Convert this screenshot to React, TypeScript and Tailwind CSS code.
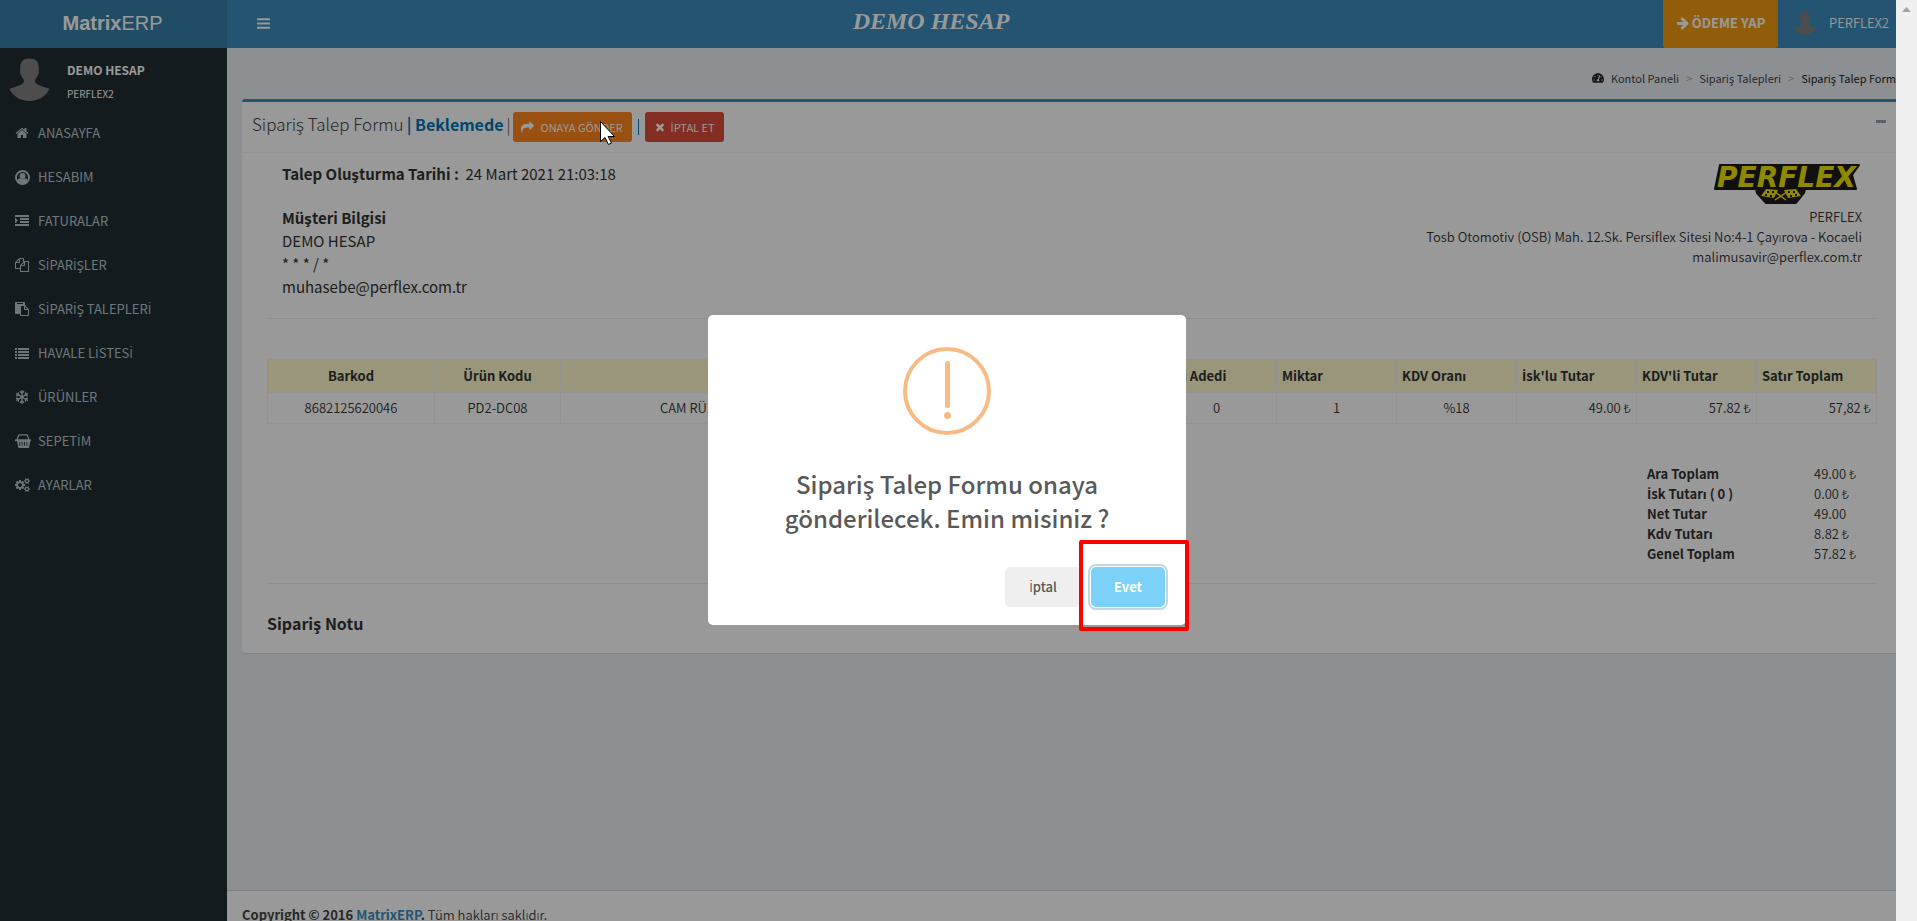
import React, { useState } from "react";
import { FaRegSnowflake, FaTachometerAlt } from "react-icons/fa";

const paths = {
  home: "M1472 992v480q0 26-19 45t-45 19h-384v-384h-256v384h-384q-26 0-45-19t-19-45v-480q0-1 .5-3t.5-3l575-474 575 474q1 2 1 6zm223-69l-62 74q-8 9-21 11h-3q-13 0-21-7l-692-577-692 577q-12 8-24 7-13-2-21-11l-62-74q-8-10-7-23.5t11-21.5l719-599q32-26 76-26t76 26l244 204v-195q0-14 9-23t23-9h192q14 0 23 9t9 23v408l219 182q10 8 11 21.5t-7 23.5z",
  indent: "M352 832q0 14-9 23l-288 288q-9 9-23 9-13 0-22.5-9.5t-9.5-22.5v-576q0-13 9.5-22.5t22.5-9.5q14 0 23 9l288 288q9 9 9 23zM0 1280h1792v256H0zM640 896h1152v256H640zM640 512h1152v256H640zM0 128h1792v256H0z",
  files: "M1696 384q40 0 68 28t28 68v1216q0 40-28 68t-68 28h-960q-40 0-68-28t-28-68v-288h-544q-40 0-68-28t-28-68v-672q0-40 20-88t48-76l408-408q28-28 76-48t88-20h416q40 0 68 28t28 68v328q68-40 128-40h416zm-544 213l-299 299h299v-299zm-640-384l-299 299h299v-299zm196 647l316-316v-416h-384v416q0 40-28 68t-68 28h-416v640h512v-256q0-40 20-88t48-76zm956 804v-1152h-384v416q0 40-28 68t-68 28h-416v640h896z",
  paste: "M768 1664h896v-640h-416q-40 0-68-28t-28-68v-416h-384v1152zm256-1440v-64q0-13-9.5-22.5t-22.5-9.5h-704q-13 0-22.5 9.5t-9.5 22.5v64q0 13 9.5 22.5t22.5 9.5h704q13 0 22.5-9.5t9.5-22.5zm256 672h299l-299-299v299zm512 128v672q0 40-28 68t-68 28h-960q-40 0-68-28t-28-68v-160h-544q-40 0-68-28t-28-68v-1344q0-40 28-68t68-28h1088q40 0 68 28t28 68v328q21 13 36 28l408 408q28 28 48 76t20 88z",
  list: "M0 256h256v256H0zM384 256h1408v256H384zM0 640h256v256H0zM384 640h1408v256H384zM0 1024h256v256H0zM384 1024h1408v256H384zM0 1408h256v256H0zM384 1408h1408v256H384z",
  basket: "M0 768q0-64 64-64h120L330 250q30-100 140-100h852q110 0 140 100l146 454h120q64 0 64 64v96q0 64-64 64h-30l-110 650q-20 100-120 100H464q-100 0-120-100L234 928h-170q-64 0-64-64zM330 704h1132L1340 330q-12-40-60-40H512q-48 0-60 40zM480 1020v420h96v-420zM752 1020v420h96v-420zM1024 1020v420h96v-420zM1280 1020v420h96v-420z",
  cogs: "M896 896q0-106-75-181t-181-75-181 75-75 181 75 181 181 75 181-75 75-181zm768 512q0-52-38-90t-90-38-90 38-38 90q0 53 37.5 90.5t90.5 37.5 90.5-37.5 37.5-90.5zm0-1024q0-52-38-90t-90-38-90 38-38 90q0 53 37.5 90.5t90.5 37.5 90.5-37.5 37.5-90.5zm-384 421v185q0 10-7 19.5t-16 10.5l-155 24q-11 35-32 76 34 48 90 115 7 11 7 20 0 12-7 19-23 30-82.5 89.5t-78.5 59.5q-11 0-21-7l-115-90q-37 19-77 31-11 108-23 155-7 24-30 24h-186q-11 0-20-7.5t-10-17.5l-23-153q-34-10-75-31l-118 89q-7 7-20 7-11 0-21-8-144-133-144-160 0-9 7-19 10-14 41-53t47-61q-23-44-35-82l-152-24q-10-1-17-9.5t-7-19.5v-185q0-10 7-19.5t16-10.5l155-24q11-35 32-76-34-48-90-115-7-11-7-20 0-12 7-20 22-30 82-89t79-59q11 0 21 7l115 90q34-18 77-32 11-108 23-154 7-24 30-24h186q11 0 20 7.5t10 17.5l23 153q34 10 75 31l118-89q8-7 20-7 11 0 21 8 144 133 144 160 0 8-7 19-12 16-42 54t-45 60q23 48 34 82l152 23q10 2 17 10.5t7 19.5zm640 533v140q0 16-149 31-12 27-30 52 51 113 51 138 0 4-4 7-122 71-124 71-8 0-46-47t-52-68q-20 2-30 2t-30-2q-14 21-52 68t-46 47q-2 0-124-71-4-3-4-7 0-25 51-138-18-25-30-52-149-15-149-31v-140q0-16 149-31 13-29 30-52-51-113-51-138 0-4 4-7 4-2 35-20t59-34 30-16q8 0 46 46.5t52 67.5q20-2 30-2t30 2q51-71 92-112l6-2q4 0 124 70 4 3 4 7 0 25-51 138 17 23 30 52 149 15 149 31zm0-1024v140q0 16-149 31-12 27-30 52 51 113 51 138 0 4-4 7-122 71-124 71-8 0-46-47t-52-68q-20 2-30 2t-30-2q-14 21-52 68t-46 47q-2 0-124-71-4-3-4-7 0-25 51-138-18-25-30-52-149-15-149-31v-140q0-16 149-31 13-29 30-52-51-113-51-138 0-4 4-7 4-2 35-20t59-34 30-16q8 0 46 46.5t52 67.5q20-2 30-2t30 2q51-71 92-112l6-2q4 0 124 70 4 3 4 7 0 25-51 138 17 23 30 52 149 15 149 31z",
  share: "M1792 640q0 26-19 45l-512 512q-19 19-45 19t-45-19-19-45v-256h-224q-98 0-175.5 6t-154 21.5-133 42.5-105.5 69.5-80 101-48.5 138.5-17.5 181q0 55 5 123 0 6 2.5 23.5t2.5 26.5q0 15-8.5 25t-23.5 10q-16 0-28-17-7-9-13-22t-13.5-30-10.5-24q-127-285-127-451 0-199 53-333 162-403 875-403h224v-256q0-26 19-45t45-19 45 19l512 512q19 19 19 45z",
  times: "M1490 1322q0 40-28 68l-136 136q-28 28-68 28t-68-28l-294-294-294 294q-28 28-68 28t-68-28l-136-136q-28-28-28-68t28-68l294-294-294-294q-28-28-28-68t28-68l136-136q28-28 68-28t68 28l294 294 294-294q28-28 68-28t68 28l136 136q28 28 28 68t-28 68l-294 294 294 294q28 28 28 68z",
  arrow: "M1600 960q0 54-37 91l-651 651q-39 37-91 37-51 0-90-37l-75-75q-38-38-38-91t38-91l293-293h-704q-52 0-84.5-37.5t-32.5-90.5v-128q0-53 32.5-90.5t84.5-37.5h704l-293-294q-38-36-38-90t38-90l75-75q38-38 90-38 53 0 91 38l651 651q37 35 37 90z",
  bars: "M128 256h1536v256H128zM128 768h1536v256H128zM128 1280h1536v256H128z",
};

const Icon = ({ d, className = "size-[14px]" }: { d: string; className?: string }) => (
  <svg viewBox="0 0 1792 1792" fill="currentColor" fillRule="evenodd" className={`shrink-0 overflow-visible ${className}`}>
    <path d={d} />
  </svg>
);

// Noto CJK has no dotted capital İ, so that one letter comes from Open Sans
const Tr = ({ children }: { children: string }) => (
  <span>
    {children.split(/(İ)/).map((part, i) =>
      part === "İ" ? <span key={i} className="font-['Open_Sans',sans-serif]">İ</span> : part
    )}
  </span>
);

const UserIcon = () => (
  <svg viewBox="0 0 28 28" fill="none" className="size-[15px] shrink-0">
    <circle cx="14" cy="14" r="12.2" stroke="currentColor" strokeWidth="3.600" />
    <circle cx="14" cy="11" r="5.500" fill="currentColor" />
    <path d="M4 21c1-4 3-5.500 5.500-5.500 2.500 2 6.500 2 9 0 2.500 0 4.500 1.500 5.500 5.500-5 6-15 6-20 0z" fill="currentColor" />
  </svg>
);

const Avatar = ({ className }: { className: string }) => (
  <svg viewBox="0 0 42 44" className={`shrink-0 ${className}`}>
    <path
      d="M21 0c6 0 9.500 3 9.500 9 0 3 .5 6-1 8.500-1 2-2.500 3.500-3 5.500 1 4 6 5 15 8-3 7-11 12.500-20.500 12.500S3 38 .5 31c9-3 14-4 15-8-.5-2-2-3.500-3-5.500-1.500-2.500-1-5.500-1-8.500C11.500 3 15 0 21 0z"
      fill="#808080"
    />
  </svg>
);

const PerflexLogo = () => (
  <svg viewBox="0 0 146 43" className="h-[43px] w-[146px]" role="img" aria-label="PERFLEX">
    <path
      d="M6 2H145L138 12 142 26H91L90 30 82 40H52L43 30 42 26H1z"
      fill="#1e1a1c"
      stroke="#1e1a1c"
      strokeWidth="2"
      strokeLinejoin="round"
    />
    <text
      x="3"
      y="24"
      fontSize="28"
      fontWeight="bold"
      fontStyle="italic"
      fontFamily="DejaVu Sans, sans-serif"
      fill="#eee400"
    >
      PERFLEX
    </text>
    <path d="M72 37L61 29M61 37l12-8" stroke="#eee400" strokeWidth="1.500" />
    <path d="M52 26l12 1-4 8-13-2zM82 26l-12 1 4 8 13-2z" fill="#eee400" />
    <path
      d="M53 28h2v2h-2zM58 28h2v2h-2zM51 31h2v2h-2zM56 32h2v2h-2zM79 28h2v2h-2zM74 28h2v2h-2zM81 31h2v2h-2zM76 32h2v2h-2z"
      fill="#1e1a1c"
    />
  </svg>
);

const menu = [
  { label: "ANASAYFA", icon: <Icon d={paths.home} /> },
  { label: "HESABIM", icon: <UserIcon /> },
  { label: "FATURALAR", icon: <Icon d={paths.indent} /> },
  { label: "SİPARİŞLER", icon: <Icon d={paths.files} /> },
  { label: "SİPARİŞ TALEPLERİ", icon: <Icon d={paths.paste} /> },
  { label: "HAVALE LİSTESİ", icon: <Icon d={paths.list} /> },
  { label: "ÜRÜNLER", icon: <FaRegSnowflake className="size-[14px]" /> },
  { label: "SEPETİM", icon: <Icon d={paths.basket} className="size-[16px]" /> },
  { label: "AYARLAR", icon: <Icon d={paths.cogs} /> },
];

const totals = [
  ["Ara Toplam", "49.00 ₺"],
  ["İsk Tutarı ( 0 )", "0.00 ₺"],
  ["Net Tutar", "49.00"],
  ["Kdv Tutarı", "8.82 ₺"],
  ["Genel Toplam", "57.82 ₺"],
];

const th = "border border-b-2 border-[#f4f4f4] px-[5px] pt-[2px] font-bold";
const td = "border border-[#f4f4f4] px-[5px]";

const Sidebar = () => (
  <aside className="w-[227px] shrink-0 bg-[#222d32] text-[#b8c7ce]">
    <div className="flex h-[63px] gap-[17px] pt-[10px] pl-[9px]">
      <Avatar className="h-[44px] w-[41px]" />
      <div className="text-white">
        <p className="text-[12px] leading-[24px] font-bold">DEMO HESAP</p>
        <a href="#" className="block text-[10px] leading-[24px] font-normal">PERFLEX2</a>
      </div>
    </div>
    <nav>
      {menu.map((item) => (
        <a key={item.label} href="#" className="flex h-[44px] items-center pl-[15px] text-[13px] font-normal">
          <span className="w-[23px]">{item.icon}</span>
          <Tr>{item.label}</Tr>
        </a>
      ))}
    </nav>
  </aside>
);

const TopBar = () => (
  <header className="flex h-[48px] shrink-0 bg-[#3c8dbc] text-white">
    <a
      href="#"
      className="flex w-[227px] items-center justify-center bg-[#367fa9] pr-[2px] pb-[2px] font-['Liberation_Sans',Arial,sans-serif] text-[20px] font-normal"
    >
      <b>Matrix</b>ERP
    </a>
    <button type="button" aria-label="Menü" className="flex items-center pr-3 pb-[2px] pl-[29px]">
      <Icon d={paths.bars} className="size-[15px]" />
    </button>
    <h1 className="flex-1 pt-[6px] pr-[84px] text-center font-['Liberation_Serif',serif] text-[24px] leading-[30px] font-bold italic">
      DEMO HESAP
    </h1>
    <a href="#" className="flex w-[115px] items-center justify-center gap-[2px] rounded-b-[3px] bg-[#f39c12] pb-[2px] text-[13px] font-bold">
      <Icon d={paths.arrow} />
      ÖDEME YAP
    </a>
    <a href="#" className="flex w-[118px] items-center gap-[13px] pb-[2px] pl-[16px] text-[13px]">
      <Avatar className="h-[25px] w-[22px]" />
      PERFLEX2
    </a>
  </header>
);

const ConfirmModal = ({ onClose }: { onClose: () => void }) => (
  <div className="absolute inset-0 flex items-center justify-center bg-black/40 pt-[19px] pr-[2px]">
    <div role="dialog" aria-modal="true" className="relative w-[478px] rounded-[5px] bg-white pt-[32px] text-center">
      <div className="mx-auto flex size-[88px] flex-col items-center gap-1 rounded-full border-4 border-[#f8bb86] pt-[10px]">
        <span className="h-[47px] w-[5px] rounded-[2px] bg-[#f8bb86]" />
        <span className="size-[7px] rounded-full bg-[#f8bb86]" />
      </div>
      <h2 className="mx-auto mt-[32px] w-[400px] text-[24px] leading-[34px] font-medium text-[#595959]">
        Sipariş Talep Formu onaya gönderilecek. Emin misiniz ?
      </h2>
      <div className="flex justify-end gap-[10px] pt-[32px] pr-[21px] pb-[18px] text-[13px] font-bold">
        <button type="button" onClick={onClose} className="h-[40px] w-[76px] rounded-[5px] bg-[#efefef] font-medium text-[#555]">
          <Tr>İptal</Tr>
        </button>
        <button
          type="button"
          onClick={onClose}
          className="h-[40px] w-[74px] rounded-[5px] bg-[#7cd1f9] text-white shadow-[0_0_0_1px_#fff,0_0_0_3px_rgba(43,114,165,0.29)]"
        >
          Evet
        </button>
      </div>
      {/* kırmızı vurgu çerçevesi */}
      <div className="pointer-events-none absolute -right-[3px] -bottom-[6px] h-[91px] w-[110px] rounded-[2px] border-4 border-[#ff0000]" />
    </div>
  </div>
);

const OrderCard = () => (
  <section className="ml-[15px] rounded-l-[3px] border-t-[3px] border-[#3c8dbc] bg-white shadow-[0_1px_1px_rgba(0,0,0,0.1)]">
    <div className="flex h-[51px] items-center border-b border-[#f4f4f4] pr-[10px] pl-[10px]">
      <h3 className="flex items-center text-[16px] leading-[20px] text-[#444]">
        <span className="mr-[2px] flex gap-[3px] pb-[7px] font-light">
          <span className="text-[17px]">Sipariş Talep Formu</span>
          <span className="font-bold text-[#0073b7]">| Beklemede</span>
          |
        </span>
        <button type="button" className="flex h-[30px] w-[119px] items-center justify-center gap-[6px] rounded-[3px] bg-[#ff851b] text-[11px] font-normal text-white">
          <Icon d={paths.share} className="size-[13px]" />
          ONAYA GÖNDER
        </button>
        <span className="mx-[6px] h-[16px] w-px bg-[#0073b7]" />
        <button type="button" className="flex h-[30px] w-[79px] items-center justify-center gap-[5px] rounded-[3px] bg-[#dd4b39] text-[11px] font-normal text-white">
          <Icon d={paths.times} className="size-[12px]" />
          <Tr>İPTAL ET</Tr>
        </button>
      </h3>
      <button type="button" aria-label="Küçült" className="mb-[12px] ml-auto h-[3px] w-[10px] bg-[#97a0b3]" />
    </div>

    <div className="pr-[19px] pl-[25px]">
      <div className="flex justify-between pr-[15px] pl-[15px]">
        <div className="pt-[9px] text-[15px] leading-[23px] font-normal">
          <p className="mb-[21px]">
            <b className="font-bold">Talep Oluşturma Tarihi :</b>&nbsp; 24 Mart 2021 21:03:18
          </p>
          <p className="font-bold">Müşteri Bilgisi</p>
          <p>DEMO HESAP</p>
          <p>* * * / *</p>
          <p>muhasebe@perflex.com.tr</p>
        </div>
        <div className="flex flex-col items-end pt-[10px] text-right text-[13px] leading-[20px]">
          <div className="mr-[2px] mb-[1px]">
            <PerflexLogo />
          </div>
          <p>PERFLEX</p>
          <p>Tosb Otomotiv (OSB) Mah. 12.Sk. Persiflex Sitesi No:4-1 Çayırova - Kocaeli</p>
          <p>malimusavir@perflex.com.tr</p>
        </div>
      </div>

      <hr className="mt-[20px] border-[#eee]" />

      <table className="mt-[40px] w-full table-fixed border-collapse text-[13px]">
        <colgroup>
          <col className="w-[167px]" />
          <col className="w-[126px]" />
          <col />
          <col className="w-[120px]" />
          <col className="w-[120px]" />
          <col className="w-[120px]" />
          <col className="w-[120px]" />
          <col className="w-[120px]" />
          <col className="w-[120px]" />
        </colgroup>
        <thead>
          <tr className="h-[32px] bg-[#fffacd] text-left">
            <th className={`${th} text-center`}>Barkod</th>
            <th className={`${th} text-center`}>Ürün Kodu</th>
            <th className={`${th} text-center`}>Ürün Adı</th>
            <th className={th}>Koli Adedi</th>
            <th className={th}>Miktar</th>
            <th className={th}>KDV Oranı</th>
            <th className={th}><Tr>İsk'lu Tutar</Tr></th>
            <th className={th}>KDV'li Tutar</th>
            <th className={th}>Satır Toplam</th>
          </tr>
        </thead>
        <tbody>
          <tr className="h-[32px] text-center">
            <td className={td}>8682125620046</td>
            <td className={td}>PD2-DC08</td>
            <td className="border border-[#f4f4f4] pl-[99px] text-left">CAM RÜZGARLIĞI</td>
            <td className={td}>0</td>
            <td className={td}>1</td>
            <td className={td}>%18</td>
            <td className={`${td} text-right`}>49.00 ₺</td>
            <td className={`${td} text-right`}>57.82 ₺</td>
            <td className={`${td} text-right`}>57,82 ₺</td>
          </tr>
        </tbody>
      </table>

      <table className="mt-[40px] ml-auto w-[230px] text-left text-[13px] leading-[20px]">
        <tbody>
          {totals.map(([label, value]) => (
            <tr key={label}>
              <th className="w-[167px] font-bold"><Tr>{label}</Tr></th>
              <td>{value}</td>
            </tr>
          ))}
        </tbody>
      </table>

      <hr className="mt-[19px] border-[#eee]" />
      <h4 className="pt-[29px] pb-[20px] text-[16px] leading-[20px] font-bold">Sipariş Notu</h4>
    </div>
  </section>
);

const App = () => {
  const [open, setOpen] = useState(true);

  return (
    <div className="flex h-screen overflow-hidden font-['Noto_Sans_CJK_SC','Noto_Sans',sans-serif] leading-[20px] font-[350] text-[#333]">
      <div className="relative flex min-w-0 flex-1 flex-col overflow-hidden">
        <TopBar />
        <div className="flex min-h-0 flex-1">
          <Sidebar />
          <main className="flex min-w-0 flex-1 flex-col bg-[#ecf0f5]">
            <ol className="flex h-[51px] shrink-0 items-center justify-end pt-[8px] text-[11px] whitespace-nowrap text-[#444]">
              <li className="flex items-center gap-[7px] font-normal">
                <FaTachometerAlt className="size-[12px] text-[#222]" />
                <a href="#">Kontol Paneli</a>
              </li>
              <li className="px-[7px] text-[#aaa]">&gt;</li>
              <li className="font-normal"><a href="#">Sipariş Talepleri</a></li>
              <li className="px-[7px] text-[#aaa]">&gt;</li>
              <li className="font-normal text-[#222]">Sipariş Talep Form</li>
            </ol>
            <OrderCard />
            <footer className="mt-auto h-[31px] shrink-0 overflow-hidden border-t border-[#d2d6de] bg-white pt-[14px] pl-[15px] text-[13px] leading-[20px] text-[#444]">
              <b className="font-bold">Copyright © 2016 <a href="#" className="text-[#3c8dbc]">MatrixERP</a>.</b> Tüm hakları saklıdır.
            </footer>
          </main>
        </div>
        {open && <ConfirmModal onClose={() => setOpen(false)} />}
        <svg viewBox="0 0 15 24" className="pointer-events-none absolute top-[121px] left-[600px] h-[24px] w-[15px]">
          <path d="M.5.5v20l4.500-4 3.500 7 3-1.500-3.300-6.500H14.500z" fill="#fff" stroke="#000" />
        </svg>
      </div>
      <div className="flex w-[21px] shrink-0 justify-center bg-[#f0f0f0] pt-[7px]">
        <svg viewBox="0 0 9 5" className="h-[5px] w-[9px]">
          <path d="M4.500 0L9 5H0z" fill="#a3a3a3" />
        </svg>
      </div>
    </div>
  );
};

export default App;
